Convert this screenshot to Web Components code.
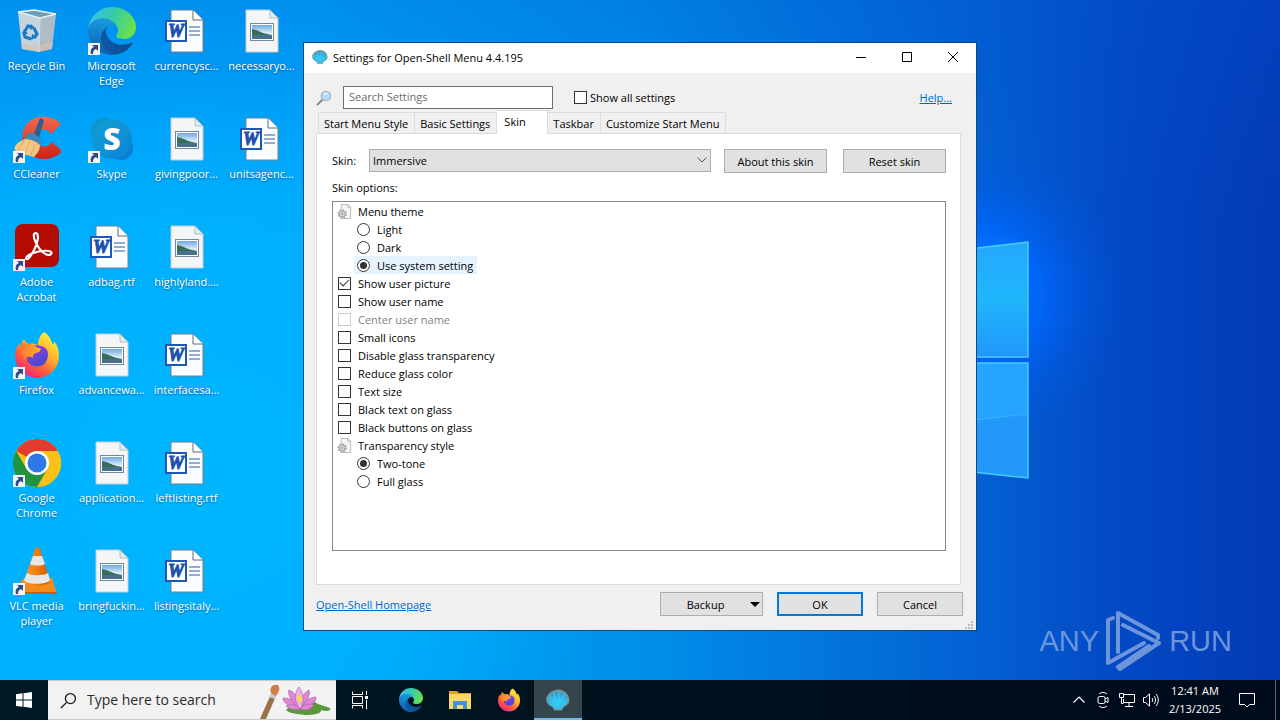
<!DOCTYPE html>
<html lang="en">
<head>
<meta charset="utf-8">
<title>Desktop</title>
<style>
  html, body { height: 100%; margin: 0; }
  body {
    overflow: hidden;
    font-family: "Open Sans", "Noto Sans", sans-serif;
    font-size: 11px;
    line-height: 15px;
    color: #000;
  }
</style>
</head>
<body>
<desktop-screen>
  <desktop-icon slot="icons" icon="bin" label="Recycle Bin"></desktop-icon>
  <desktop-icon slot="icons" icon="ccleaner" label="CCleaner" shortcut></desktop-icon>
  <desktop-icon slot="icons" icon="acrobat" label="Adobe Acrobat" shortcut></desktop-icon>
  <desktop-icon slot="icons" icon="firefox" label="Firefox" shortcut></desktop-icon>
  <desktop-icon slot="icons" icon="chrome" label="Google Chrome" shortcut></desktop-icon>
  <desktop-icon slot="icons" icon="vlc" label="VLC media player" shortcut></desktop-icon>
  <desktop-icon slot="icons" icon="edge" label="Microsoft Edge" shortcut></desktop-icon>
  <desktop-icon slot="icons" icon="skype" label="Skype" shortcut></desktop-icon>
  <desktop-icon slot="icons" icon="word" label="adbag.rtf"></desktop-icon>
  <desktop-icon slot="icons" icon="image" label="advancewa..."></desktop-icon>
  <desktop-icon slot="icons" icon="image" label="application..."></desktop-icon>
  <desktop-icon slot="icons" icon="image" label="bringfuckin..."></desktop-icon>
  <desktop-icon slot="icons" icon="word" label="currencysc..."></desktop-icon>
  <desktop-icon slot="icons" icon="image" label="givingpoor..."></desktop-icon>
  <desktop-icon slot="icons" icon="image" label="highlyland...."></desktop-icon>
  <desktop-icon slot="icons" icon="word" label="interfacesa..."></desktop-icon>
  <desktop-icon slot="icons" icon="word" label="leftlisting.rtf"></desktop-icon>
  <desktop-icon slot="icons" icon="word" label="listingsitaly..."></desktop-icon>
  <desktop-icon slot="icons" icon="image" label="necessaryo..."></desktop-icon>
  <desktop-icon slot="icons" icon="word" label="unitsagenc..."></desktop-icon>

  <app-window slot="windows" heading="Settings for Open-Shell Menu 4.4.195">
    <settings-panel>
      <option-row kind="group" label="Menu theme"></option-row>
      <option-row kind="radio" label="Light"></option-row>
      <option-row kind="radio" label="Dark"></option-row>
      <option-row kind="radio" label="Use system setting" checked selected></option-row>
      <option-row kind="checkbox" label="Show user picture" checked></option-row>
      <option-row kind="checkbox" label="Show user name"></option-row>
      <option-row kind="checkbox" label="Center user name" disabled></option-row>
      <option-row kind="checkbox" label="Small icons"></option-row>
      <option-row kind="checkbox" label="Disable glass transparency"></option-row>
      <option-row kind="checkbox" label="Reduce glass color"></option-row>
      <option-row kind="checkbox" label="Text size"></option-row>
      <option-row kind="checkbox" label="Black text on glass"></option-row>
      <option-row kind="checkbox" label="Black buttons on glass"></option-row>
      <option-row kind="group" label="Transparency style"></option-row>
      <option-row kind="radio" label="Two-tone" checked></option-row>
      <option-row kind="radio" label="Full glass"></option-row>
    </settings-panel>
  </app-window>

  <any-run-mark slot="windows"></any-run-mark>
  <task-bar slot="taskbar"></task-bar>
</desktop-screen>

<script>
const ICONS = {
  bin: `<svg viewBox="0 0 48 48">
    <defs><linearGradient id="b2" x2="0" y2="1"><stop stop-color="#a9bcc8"/><stop offset=".8" stop-color="#b4bcc2"/><stop offset="1" stop-color="#a99c98"/></linearGradient></defs>
    <path d="M5 5 21 3 43 7 27 11Z" fill="#6f9cb5"/>
    <path d="M5 5 27 11 26 45 9 42Z" fill="#c4d3dc"/>
    <path d="M27 11 43 7 39 42 26 45Z" fill="url(#b2)"/>
    <path d="m8 36 18 3v6L9 42Zm18 3 14-4-1 7-13 3Z" fill="#d6c3bb" opacity=".7"/>
    <path d="M5 5 21 3 43 7 27 11Z" fill="none" stroke="#e6f0f4" stroke-width="1.3"/>
    <path d="M27 11 26 45" stroke="#e2eaee" stroke-width=".8"/>
    <g fill="none" stroke="#1979c7" stroke-width="3"><path d="m12 24 3-5 4 1"/><path d="m21 21 3 6-3 4"/><path d="m18 32-6-2-1-4"/></g>
    <path d="m18 17 4 4-5 2ZM24 30l-6 3 1-6ZM9 27l2-5 4 5Z" fill="#1979c7"/></svg>`,
  edge: `<svg viewBox="0 0 256 256">
    <defs><linearGradient id="e1" x1=".2" x2="1"><stop stop-color="#0c59a4"/><stop offset="1" stop-color="#114a8b"/></linearGradient>
    <linearGradient id="e2" x1=".5" x2=".3" y2="1"><stop stop-color="#1b9de2"/><stop offset=".5" stop-color="#1380cc"/><stop offset="1" stop-color="#0b5cad"/></linearGradient>
    <linearGradient id="e3" y1=".2" x2="1" y2=".5"><stop stop-color="#35c1f1"/><stop offset=".5" stop-color="#34cba8"/><stop offset="1" stop-color="#6ce04a"/></linearGradient></defs>
    <path fill="url(#e1)" d="M231 190.5c-3.4 1.8-6.9 3.4-10.5 4.7a101.5 101.5 0 0 1-35.9 6.5c-47.3 0-88.5-32.5-88.5-74.3a31.5 31.5 0 0 1 16.4-27.3c-42.8 1.8-53.8 46.4-53.8 72.5 0 73.9 68.1 81.4 82.8 81.4 7.9 0 19.8-2.3 27-4.6l1.3-.4a128.3 128.3 0 0 0 66.6-52.8 4 4 0 0 0-5.4-5.7Z"/>
    <path fill="url(#e2)" d="M105.7 241.4a79.2 79.2 0 0 1-22.7-21.3 80.7 80.7 0 0 1 29.5-120c3.2-1.5 8.5-4.2 15.6-4.1a32.4 32.4 0 0 1 25.7 13 31.9 31.9 0 0 1 6.3 18.7c0-.2 24.5-79.6-80-79.6-43.9 0-80 41.6-80 78.2a130.2 130.2 0 0 0 12.1 56 128 128 0 0 0 156.4 67 75.5 75.5 0 0 1-62.8-8Z"/>
    <path fill="url(#e3)" d="M152.3 148.9c-.8 1-3.3 2.5-3.3 5.7 0 2.6 1.7 5.1 4.7 7.2 14.4 10 41.5 8.7 41.6 8.7a59.6 59.6 0 0 0 30.3-8.3 61.4 61.4 0 0 0 30.4-52.9c.3-22.4-8-37.3-11.3-43.9C223.5 23.9 177.7 0 128 0a128 128 0 0 0-128 126.2c.5-36.5 36.8-66 80-66 3.5 0 23.5.3 42 10a72.6 72.6 0 0 1 30.9 29.3c6.1 10.6 7.2 24.1 7.2 29.5s-2.7 13.3-7.8 19.9Z"/></svg>`,
  ccleaner: `<svg viewBox="0 0 48 48">
    <defs><linearGradient id="c1" x2="0" y2="1"><stop stop-color="#ef6a50"/><stop offset="1" stop-color="#cf2013"/></linearGradient></defs>
    <path d="M48 9C38-2 15-1 10 16c-4 16 7 28 20 28 8 0 15-3 19-8l-10-9c-4 6-12 6-14 0-4-9 6-18 13-8Z" fill="url(#c1)"/>
    <path d="m27 3 4 2-6 21-6-2Z" fill="#2b5f93"/>
    <path d="M14 19c5-3 12 1 15 9l-6 3-12-7Z" fill="#3f86b8"/>
    <path d="M12 24c6 0 12 3 15 6 0 5-3 9-6 12L3 37C0 33 1 29 12 24Z" fill="#f3c682"/>
    <path d="M12 24 5 36m12-10-5 12m10-9-4 11" stroke="#e0aa66" fill="none"/></svg>`,
  acrobat: `<svg viewBox="0 0 48 48">
    <rect x="2" y="1" width="44" height="43" rx="8" fill="#b30b00"/>
    <path d="M23 10c-3 0-3 4 0 10 3 6 8 11 12 12 4 0 5-3 1-4-6-1-15 1-20 4-5 3-3 6 0 3 4-5 8-14 9-20 0-3-1-5-2-5Z" fill="none" stroke="#fff" stroke-width="2.2"/></svg>`,
  firefox: `<svg viewBox="0 0 48 48">
    <defs><linearGradient id="f1" x1=".8" y1=".1" x2=".2" y2="1"><stop stop-color="#ffe93a"/><stop offset=".35" stop-color="#ffb02c"/><stop offset=".65" stop-color="#ff5b3a"/><stop offset="1" stop-color="#e91a8c"/></linearGradient>
    <linearGradient id="f2" x2=".4" y2="1"><stop stop-color="#a23bdc"/><stop offset="1" stop-color="#4a47cf"/></linearGradient>
    <linearGradient id="f3" x2="1"><stop stop-color="#ff7a2a"/><stop offset="1" stop-color="#ffb22e"/></linearGradient></defs>
    <path d="M31 1c6 4 7 8 9 13 1-1 1-3 1-4 4 5 5 10 5 15a22 22 0 0 1-44 0C2 19 4 15 7 12c0 2 0 3 1 4 0-4 2-7 3-8 1 3 4 5 6 5 4-1 7 0 8 2 0-5 1-10 6-14Z" fill="url(#f1)"/>
    <path d="M14 18c4-5 16-5 20 1 2 3 1 12-4 15-6 3-14 1-16-5-1-4-1-8 0-11Z" fill="url(#f2)"/>
    <path d="M9 13c6-1 12 1 16 4 3 0 4 1 1 4-3 1-7 2-6 6-4-2-6-2-8 2-3-4-4-9-3-16Z" fill="url(#f3)"/></svg>`,
  chrome: `<svg viewBox="0 0 48 48">
    <circle cx="24" cy="24" r="24" fill="#fbc116"/>
    <path d="M24 24 3.2 12A24 24 0 0 1 44.8 12H24Z" fill="#e33b2e"/>
    <path d="M24 24 44.8 12A24 24 0 0 1 24 48l10-18Z" fill="#fbc116"/>
    <path d="M3.2 12A24 24 0 0 0 24 48l10.4-18L24 24l-10.4 6Z" fill="#229342"/>
    <circle cx="24" cy="24" r="12" fill="#fff"/><circle cx="24" cy="24" r="9.5" fill="#2f78ea"/></svg>`,
  vlc: `<svg viewBox="0 0 48 48">
    <defs><linearGradient id="v1"><stop stop-color="#f79a2c"/><stop offset=".5" stop-color="#f47b0c"/><stop offset="1" stop-color="#c95705"/></linearGradient></defs>
    <path d="m9 32 30-1 5 16H4Z" fill="#f28a1c"/><path d="m4 45h40v2H4Z" fill="#cb5d07"/>
    <path d="M22 2c1-2 4-2 5 0l10 32c0 6-25 6-26 0Z" fill="url(#v1)"/>
    <path d="m20 9 9 0 3 8c-3 2-12 2-15 0ZM14 26c4 3 17 3 21 0l2 7c-2 5-24 5-26 0Z" fill="#e9e7e6"/></svg>`,
  skype: `<svg viewBox="0 0 48 48">
    <defs><linearGradient id="s1" x2=".8" y2="1"><stop stop-color="#12a0d4"/><stop offset="1" stop-color="#0b86d6"/></linearGradient></defs>
    <circle cx="16" cy="16" r="13" fill="#1093c8"/><circle cx="33" cy="33" r="12" fill="#0b7fd4"/><circle cx="24" cy="24" r="20" fill="url(#s1)"/>
    <text x="24" y="35" text-anchor="middle" font-family="Open Sans" font-weight="800" font-size="30" fill="#fff">S</text></svg>`,
  word: `<svg viewBox="0 0 48 48">
    <path d="M8 3h22l10 10v32H8Z" fill="#fbfcfd" stroke="#6f7f8e"/><path d="M30 3v10h10" fill="#fff" stroke="#5b6b7a"/>
    <path d="M26 20h11M26 24h11M26 28h11" stroke="#2a5ba8" stroke-width="1.2"/>
    <rect x="3" y="14" width="20" height="20" fill="#fff" stroke="#1f57b5" stroke-width="2"/>
    <text x="13" y="30" text-anchor="middle" font-family="Liberation Serif" font-style="italic" font-weight="700" font-size="18" fill="#1c50b0" stroke="#1c50b0">W</text></svg>`,
  image: `<svg viewBox="0 0 48 48">
    <defs><linearGradient id="i1" x2="0" y2="1"><stop stop-color="#6fa6e4"/><stop offset=".6" stop-color="#dff0f8"/></linearGradient></defs>
    <path d="M8 3h24l8 8v34H8Z" fill="#f4f5f6" stroke="#c3ccd2"/><path d="M32 3v8h8Z" fill="#e3ebef" stroke="#b3c0c8"/>
    <rect x="12.500" y="16.500" width="23" height="17" fill="#fff" stroke="#71879b"/><rect x="14" y="18" width="20" height="14" fill="url(#i1)"/>
    <path d="M14 22c6 1 10 4 15 5l5 1v4H14Z" fill="#386b58"/><path d="M14 28h20v4H14Z" fill="#46718d"/></svg>`,
  shell: `<svg viewBox="0 0 24 24">
    <defs><radialGradient id="h1" cy=".6"><stop stop-color="#2fd0fb"/><stop offset=".7" stop-color="#36bbe8"/><stop offset="1" stop-color="#5aa0bd"/></radialGradient></defs>
    <path d="M8 22c0-2-1-3-3-4C1 16 0 12 1 9l2-3 2-2 3-1 2-1h4l3 1 3 2 2 3 1 4c0 3-2 5-4 6-2 1-3 2-3 4Z" fill="url(#h1)" stroke="#8c8f8b" stroke-width=".8"/>
    <path d="M7 9 5 5m6 5-1-7m5 7 1-6m2 8 3-4" stroke="#2e93b8" fill="none"/></svg>`,
  folder: `<svg viewBox="0 0 24 24">
    <path d="M1 3h8l2 2h12v4H1Z" fill="#e0a22a"/><path d="M1 6h22v15H1Z" fill="#fcd667"/>
    <path d="M5 13h14v8h-4v-4H9v4H5Z" fill="#3f96d6"/></svg>`,
  taskview: `<svg viewBox="0 0 20 20" fill="none" stroke="#fff"><path d="M2.5 1.5v3h10v-3M2.5 18.5v-3h10v3M2.5 6.5h10v7h-10ZM16.5 1v4M16.5 10v9"/><path d="M15 6h3v3h-3Z" fill="#fff" stroke="none"/></svg>`,
  start: `<svg viewBox="0 0 16 16" fill="#fff"><path d="M0 2.2 6.5 1.3V7.5H0ZM7.5 1.2 16 0v7.5H7.5ZM0 8.5h6.500v6.3L0 13.9ZM7.5 8.5H16V16l-8.500-1.2Z"/></svg>`,
  search: `<svg viewBox="0 0 18 18" fill="none" stroke="#1a1a1a" stroke-width="1.4"><circle cx="11" cy="7" r="5.3"/><path d="m7 11-6 6"/></svg>`,
  lens: `<svg viewBox="0 0 16 16"><path d="m1 15 5.500-5.500" stroke="#8a8580" stroke-width="1.8"/><circle cx="10" cy="6" r="4.600" fill="#b9dcf5" stroke="#a2b4cc" stroke-width="1.4"/><path d="M7.5 5a3 3 0 0 1 4-1.500" stroke="#fff" fill="none"/></svg>`,
  lotus: `<svg viewBox="0 0 72 36">
    <path d="M0 36 11 11l5 2L6 36Z" fill="#9a7247"/><path d="M9 14 13 8l5 2-3 6Z" fill="#c9cdd0"/>
    <path d="M11 10C9 4 13 1 18 2c3 4 0 9-3 11Z" fill="#d27c4c"/>
    <path d="M26 27c4-5 18-8 26-9 4 1 4 2 6 3l12 4c2 3-4 4-9 2 1 4-8 5-16 5-10-1-16-2-19-5Z" fill="#5a9a3a"/>
    <g fill="#dd87d3" stroke="#b458ab" stroke-width=".6"><path d="M40 25C30 25 23 20 23 15c8 0 14 4 17 10Z"/><path d="M40 25c10 0 16-5 16-11-8 1-14 5-16 11Z"/><path d="M40 25C32 20 27 11 29 7c6 2 11 10 11 18Z"/><path d="M40 25c6-5 11-13 9-18-6 3-10 11-9 18Z"/><path d="M40 26c-6-6-6-17-1-22 5 6 6 16 1 22Z" fill="#eab0e3"/><path d="M40 26c-5 2-11 0-14-3 6-3 11-1 14 3Z"/><path d="M40 26c4-5 10-6 14-4-4 5-9 6-14 4Z"/></g>
    <path d="m36 16 3-5 4 5-3 4Z" fill="#f7d35f"/></svg>`,
  gear: `<svg viewBox="0 0 16 16"><path d="M4.500.5h7l3 3v12h-10Z" fill="#f6f6f6" stroke="#b6b6b6"/><path d="M11.500.5v3h3" fill="none" stroke="#b6b6b6"/><circle cx="5.5" cy="10.5" r="4" fill="#ddd" stroke="#a5a5a5" stroke-width="2" stroke-dasharray="1.600 1.500"/><circle cx="5.5" cy="10.5" r="3.200" fill="#e6e6e6" stroke="#9d9d9d"/><circle cx="5.5" cy="10.5" r="1.200" fill="none" stroke="#9d9d9d"/></svg>`
};

class DesktopScreen extends HTMLElement {
  connectedCallback() {
    this.attachShadow({ mode: 'open' });
    this.shadowRoot.innerHTML = `
      <style>
        :host {
          display: flex;
          flex-direction: column;
          position: relative;
          height: 100vh;
          background: #0479dd;
        }
        .wallpaper {
          position: absolute;
          inset: 0;
          width: 100%;
          height: 100%;
        }
        main {
          position: relative;
          flex: 1;
          min-height: 0;
        }
        .icons {
          display: grid;
          grid-auto-flow: column;
          grid-template-rows: repeat(6, 108px);
          grid-auto-columns: 75px;
        }
      </style>
      <svg class="wallpaper" viewBox="0 0 1280 720" preserveAspectRatio="xMidYMid slice">
        <defs>
          <linearGradient id="sky">
            <stop stop-color="#00aafd"/><stop offset=".24" stop-color="#00a8fb"/>
            <stop offset=".5" stop-color="#0090ea"/><stop offset=".77" stop-color="#045fd2"/>
            <stop offset=".88" stop-color="#0348c4"/><stop offset="1" stop-color="#043ab6"/>
          </linearGradient>
          <linearGradient id="top" x2="0" y2="1">
            <stop stop-color="#0052d0" stop-opacity=".28"/><stop offset=".3" stop-color="#0052d0" stop-opacity="0"/>
          </linearGradient>
          <radialGradient id="low" cx="200" cy="480" r="420" gradientUnits="userSpaceOnUse">
            <stop stop-color="#00b6ff"/><stop offset=".5" stop-color="#00b4ff" stop-opacity=".7"/><stop offset="1" stop-color="#00b4ff" stop-opacity="0"/>
          </radialGradient>
          <radialGradient id="glow" cx="975" cy="295" r="150" gradientUnits="userSpaceOnUse">
            <stop stop-color="#0078ff"/><stop offset=".45" stop-color="#0068ff" stop-opacity=".8"/><stop offset=".75" stop-color="#005cf0" stop-opacity=".3"/><stop offset="1" stop-color="#0058e8" stop-opacity="0"/>
          </radialGradient>
          <linearGradient id="paneA" x2="0" y2="1"><stop stop-color="#24a8ff"/><stop offset=".5" stop-color="#1fb6fb"/><stop offset="1" stop-color="#2196fb"/></linearGradient>
        </defs>
        <rect width="1280" height="720" fill="url(#sky)"/>
        <rect width="1280" height="720" fill="url(#top)"/>
        <rect width="1280" height="720" fill="url(#low)"/>
        <rect width="1280" height="720" fill="url(#glow)"/>
        <path d="M900 220 1028 242 900 256Z" fill="#1a90ff" opacity=".15"/>
        <path d="M900 257 1028 242V357H900Z" fill="url(#paneA)"/>
        <path d="M900 363H1028V478L900 464Z" fill="#2298fa"/>
        <path d="M900 363H1028V414L900 428Z" fill="#27a4ff"/>
        <path d="M900 257 1028 242V357H900M900 363H1028V478L900 464" fill="none" stroke="#46cdfc" stroke-width="1.5"/>
        <path d="M900 428 1028 414" stroke="#35b4fd"/>
      </svg>
      <main>
        <div class="icons"><slot name="icons"></slot></div>
        <slot name="windows"></slot>
      </main>
      <slot name="taskbar"></slot>
    `;
  }
}

class DesktopIcon extends HTMLElement {
  connectedCallback() {
    this.attachShadow({ mode: 'open' });
    const arrow = this.hasAttribute('shortcut') ? `
      <svg class="arrow" viewBox="0 0 12 12"><rect width="12" height="12" fill="#f4f6f9"/>
      <path d="M4 2h6v6L8 6C6 7 5 8 5 11H3C2 8 3 5 6 4Z" fill="#2c4a85"/></svg>` : '';
    this.shadowRoot.innerHTML = `
      <style>
        :host { display: block; }
        button {
          display: flex;
          flex-direction: column;
          align-items: center;
          gap: 3px;
          width: 100%;
          padding: 7px 2px 0 0;
          border: 0;
          background: none;
          font: inherit;
          color: #fff;
        }
        .art { position: relative; width: 48px; height: 48px; }
        .art svg { display: block; width: 48px; height: 48px; }
        .art .arrow { position: absolute; left: 0; bottom: 0; width: 12px; height: 12px; }
        .label { text-shadow: 0 1px 2px rgba(0, 40, 90, .6); }
      </style>
      <button>
        <span class="art">${ICONS[this.getAttribute('icon')]}${arrow}</span>
        <span class="label">${this.getAttribute('label')}</span>
      </button>
    `;
  }
}

class AppWindow extends HTMLElement {
  connectedCallback() {
    this.attachShadow({ mode: 'open' });
    this.shadowRoot.innerHTML = `
      <style>
        :host {
          position: absolute;
          left: 303px;
          top: 42px;
          display: block;
          width: 672px;
          border: 1px solid #0a4a86;
          background: #f0f0f0;
        }
        header {
          display: flex;
          align-items: center;
          padding: 0 0 2px 8px;
          background: #fff;
        }
        .logo { width: 16px; height: 16px; margin-right: 5px; }
        .logo svg { display: block; }
        h1 { flex: 1; margin: 0; font: inherit; }
        button {
          display: grid;
          place-items: center;
          width: 46px;
          height: 28px;
          padding: 0;
          border: 0;
          background: none;
        }
        button svg { width: 10px; height: 10px; fill: none; stroke: #000; }
      </style>
      <header>
        <span class="logo">${ICONS.shell}</span>
        <h1>${this.getAttribute('heading')}</h1>
        <button aria-label="Minimize"><svg viewBox="0 0 10 10"><path d="M0 5.5h10"/></svg></button>
        <button aria-label="Maximize"><svg viewBox="0 0 10 10"><path d="M.5.5h9v9h-9Z"/></svg></button>
        <button aria-label="Close"><svg viewBox="0 0 10 10"><path d="m0 0 10 10M10 0 0 10"/></svg></button>
      </header>
      <slot></slot>
    `;
  }
}

const CHECK_STYLE = `
  input[type=checkbox], input[type=radio] {
    appearance: none;
    display: grid;
    place-items: center;
    flex: none;
    width: 13px;
    height: 13px;
    margin: 0;
    border: 1px solid #333;
    background: #fff;
  }
  input[type=radio] { border-radius: 50%; }
  input[type=radio]:checked::before {
    content: '';
    width: 7px;
    height: 7px;
    border-radius: 50%;
    background: #333;
  }
  input[type=checkbox]:checked::before {
    content: '';
    width: 8px;
    height: 4px;
    margin-bottom: 3px;
    border: solid #333;
    border-width: 0 0 1px 1px;
    transform: rotate(-45deg);
  }
  input:disabled { border-color: #ccc; }
`;

class OptionRow extends HTMLElement {
  connectedCallback() {
    this.attachShadow({ mode: 'open' });
    const kind = this.getAttribute('kind');
    const flags = ['checked', 'disabled'].filter(f => this.hasAttribute(f)).join(' ');
    const text = this.getAttribute('label');
    const body = kind === 'group'
      ? `<div class="row group">${ICONS.gear}<span>${text}</span></div>`
      : `<label class="row ${kind}"><input type="${kind}" ${flags}><span>${text}</span></label>`;
    this.shadowRoot.innerHTML = `
      <style>
        ${CHECK_STYLE}
        :host { display: flex; }
        .row { display: flex; align-items: center; gap: 7px; height: 18px; padding: 0 4px 0 5px; }
        .group { gap: 6px; padding-left: 4px; }
        .group svg { width: 15px; height: 15px; }
        .radio { margin-left: 21px; padding-left: 3px; }
        :host([selected]) .row { background: #e5f3ff; }
        :host([disabled]) .row { color: #838383; }
      </style>
      ${body}
    `;
  }
}

class SettingsPanel extends HTMLElement {
  connectedCallback() {
    this.attachShadow({ mode: 'open' });
    this.shadowRoot.innerHTML = `
      <style>
        ${CHECK_STYLE}
        :host { display: block; padding: 13px 13px 0 12px; }
        a { color: #0066cc; }
        button, select, input { font: inherit; color: inherit; box-sizing: border-box; }
        .find { display: flex; align-items: center; padding-right: 11px; }
        .lens { width: 16px; height: 16px; margin-right: 11px; }
        .lens svg { display: block; }
        .find input[type=search] {
          width: 210px;
          height: 23px;
          margin-right: 21px;
          padding: 0 5px 2px;
          border: 1px solid #6e6e6e;
          background: #fff;
          appearance: none;
        }
        input::placeholder { color: #6b6b6b; opacity: 1; }
        .find label { display: flex; align-items: center; gap: 3px; flex: 1; }
        nav { display: flex; align-items: flex-end; height: 23px; padding: 1px 2px 0; }
        nav button {
          height: 21px;
          padding: 0 6px 0 5px;
          border: 1px solid #dcdcdc;
          border-width: 1px 1px 0 0;
          background: #f0f0f0;
          white-space: nowrap;
        }
        nav button:first-child { border-left-width: 1px; }
        nav button[aria-selected=true] {
          height: 24px;
          width: 51px;
          margin-bottom: -1px;
          padding: 0 7px 3px;
          border-color: #d9d9d9;
          background: #fff;
          text-align: left;
          z-index: 1;
        }
        section {
          margin-right: 2px;
          padding: 15px 14px 33px 15px;
          border: 1px solid #dcdcdc;
          background: #fff;
        }
        .skin { display: flex; align-items: flex-start; margin-bottom: 7px; }
        .skin label { width: 37px; line-height: 23px; }
        .pick { position: relative; flex: 1; margin-right: 13px; display: flex; }
        select {
          appearance: none;
          width: 100%;
          height: 23px;
          padding: 0 3px;
          border: 1px solid #adadad;
          border-radius: 0;
          background: #e1e1e1;
        }
        .pick svg { position: absolute; right: 4px; top: 8px; width: 10px; height: 6px; fill: none; stroke: #555; pointer-events: none; }
        .btn {
          width: 103px;
          height: 24px;
          padding: 0;
          border: 1px solid #adadad;
          background: #e1e1e1;
        }
        .skin .btn + .btn { margin-left: 16px; }
        h2 { margin: 0 0 6px; font: inherit; }
        .list {
          min-height: 348px;
          border: 1px solid #828790;
          background: #fff;
        }
        footer { display: flex; align-items: center; gap: 14px; height: 38px; }
        footer a { flex: 1; }
        footer .btn { width: 86px; }
        footer .split { display: flex; align-items: center; width: 103px; padding-right: 2px; }
        .split span { flex: 1; }
        .split svg { width: 10px; height: 5px; }
        footer .ok { border: 2px solid #0078d7; }
        .grip { display: block; width: 9px; height: 9px; margin: -2px -11px 0 auto; fill: #b8b8b8; }
      </style>
      <div class="find">
        <span class="lens">${ICONS.lens}</span>
        <input type="search" placeholder="Search Settings" aria-label="Search Settings">
        <label><input type="checkbox">Show all settings</label>
        <a href="#help">Help...</a>
      </div>
      <nav role="tablist">
        <button role="tab">Start Menu Style</button>
        <button role="tab">Basic Settings</button>
        <button role="tab" aria-selected="true">Skin</button>
        <button role="tab">Taskbar</button>
        <button role="tab">Customize Start Menu</button>
      </nav>
      <section>
        <div class="skin">
          <label for="skin">Skin:</label>
          <div class="pick">
            <select id="skin"><option>Immersive</option></select>
            <svg viewBox="0 0 10 6"><path d="m.5.5 4.500 4.500 4.500-4.500"/></svg>
          </div>
          <button class="btn">About this skin</button>
          <button class="btn">Reset skin</button>
        </div>
        <h2>Skin options:</h2>
        <div class="list"><slot></slot></div>
      </section>
      <footer>
        <a href="#home">Open-Shell Homepage</a>
        <button class="btn split"><span>Backup</span><svg viewBox="0 0 10 5"><path d="M0 0h10L5 5Z"/></svg></button>
        <button class="btn ok">OK</button>
        <button class="btn">Cancel</button>
      </footer>
      <svg class="grip" viewBox="0 0 9 9"><path d="M6 0h2v2H6ZM3 3h2v2H3ZM6 3h2v2H6ZM0 6h2v2H0ZM3 6h2v2H3ZM6 6h2v2H6Z"/></svg>
    `;
  }
}

class AnyRunMark extends HTMLElement {
  connectedCallback() {
    this.attachShadow({ mode: 'open' });
    this.shadowRoot.innerHTML = `
      <style>
        :host {
          position: absolute;
          right: 48px;
          bottom: 8px;
          display: flex;
          align-items: center;
          gap: 7px;
          font: 29px/40px "Liberation Sans", sans-serif;
          color: #7fa3e0;
          opacity: .85;
        }
        svg { width: 56px; height: 62px; fill: none; stroke: #7fa3e0; stroke-width: 4; stroke-linejoin: round; stroke-linecap: round; }
      </style>
      <span>ANY</span>
      <svg viewBox="0 0 56 62"><path d="M12 42V3l40 22v3M17 15l36 18-39 26-2-2 31-21M7 8 2 10v43l36-20"/></svg>
      <span>RUN</span>
    `;
  }
}

class TaskBar extends HTMLElement {
  connectedCallback() {
    this.attachShadow({ mode: 'open' });
    this.shadowRoot.innerHTML = `
      <style>
        :host {
          position: relative;
          display: flex;
          height: 40px;
          background: linear-gradient(90deg, #001a25, #00101c 60%, #000a1b);
          color: #fff;
        }
        button {
          display: grid;
          place-items: center;
          width: 48px;
          height: 40px;
          padding: 0;
          border: 0;
          background: none;
        }
        .apps { display: flex; gap: 1px; padding-left: 3px; }
        .apps svg { width: 24px; height: 24px; }
        .view svg { width: 20px; height: 20px; }
        .start svg { width: 16px; height: 16px; }
        .active { background: #34454e; box-shadow: inset 0 -2px #76b9ed; }
        .search {
          display: flex;
          align-items: center;
          width: 288px;
          box-sizing: border-box;
          padding: 0 4px 0 12px;
          border: solid #c9c9c9;
          border-width: 1px 0;
          background: #f2f2f2;
        }
        .search svg { flex: none; width: 17px; height: 17px; }
        .search .lotus { align-self: flex-end; width: 72px; height: 36px; }
        input {
          flex: 1;
          min-width: 0;
          padding: 0 0 0 10px;
          border: 0;
          background: none;
          font: inherit;
          font-size: 14px;
          line-height: 20px;
        }
        input::placeholder { color: #2b2b2b; opacity: 1; }
        .tray { display: flex; align-items: center; margin-left: auto; }
        .tray svg { width: 18px; height: 18px; fill: none; stroke: #fff; }
        .tray button { width: 24px; }
        .clock { width: 64px; text-align: center; line-height: 18px; }
        .tray .note { width: 40px; margin-right: 8px; }
        .peek { width: 4px; height: 40px; border-left: 1px solid #5a6370; }
      </style>
      <button class="start" aria-label="Start">${ICONS.start}</button>
      <label class="search">
        ${ICONS.search}
        <input type="text" placeholder="Type here to search">
        ${ICONS.lotus.replace('<svg', '<svg class="lotus"')}
      </label>
      <button class="view" aria-label="Task View">${ICONS.taskview}</button>
      <div class="apps">
        <button aria-label="Microsoft Edge">${ICONS.edge}</button>
        <button aria-label="File Explorer">${ICONS.folder}</button>
        <button aria-label="Firefox">${ICONS.firefox}</button>
        <button class="active" aria-label="Open-Shell">${ICONS.shell}</button>
      </div>
      <div class="tray">
        <button aria-label="Show hidden icons"><svg viewBox="0 0 18 18"><path d="m3.5 11.5 5.500-5.500 5.500 5.500" stroke-width="1.2"/></svg></button>
        <button aria-label="Meet now"><svg viewBox="0 0 18 18"><rect x="4" y="5.5" width="7" height="7" rx="1.5"/><path d="m11 8 3-1.500v5L11 10M5 3c2-2 6-2 8 0M5 15c2 2 6 2 8 0"/></svg></button>
        <button aria-label="Network"><svg viewBox="0 0 18 18"><path d="M6 3.5h10.500v8H5.500V8M11 11.5v4M7 15.5h8M1.500 2.5h4v4h-4ZM3.500 6.5v6h2"/></svg></button>
        <button aria-label="Volume"><svg viewBox="0 0 18 18"><path d="M1.500 6.500h2l4-3.500v12l-4-3.500h-2ZM10 7c1 1 1 3 0 4M12 5c2 2 2 6 0 8M14 3c3 3 3 9 0 12"/></svg></button>
        <div class="clock"><div>12:41 AM</div><div>2/13/2025</div></div>
        <button class="note" aria-label="Notifications"><svg viewBox="0 0 18 18"><path d="M1.500 2.500h15v11h-5L9 16l-2.500-2.500h-5Z"/></svg></button>
        <span class="peek"></span>
      </div>
    `;
  }
}

customElements.define('desktop-screen', DesktopScreen);
customElements.define('desktop-icon', DesktopIcon);
customElements.define('app-window', AppWindow);
customElements.define('option-row', OptionRow);
customElements.define('settings-panel', SettingsPanel);
customElements.define('any-run-mark', AnyRunMark);
customElements.define('task-bar', TaskBar);
</script>
</body>
</html>
